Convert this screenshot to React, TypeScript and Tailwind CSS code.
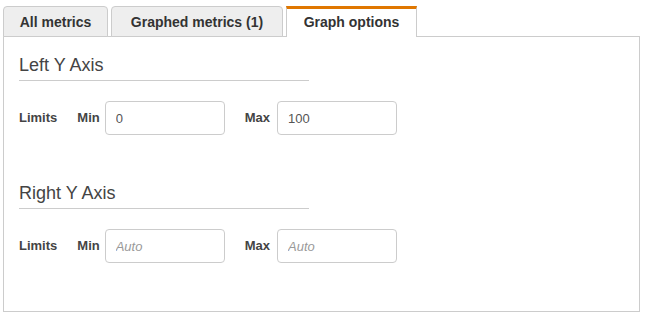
import React from "react";

function Tab({ label, active, w }: { label: string; active?: boolean; w: string }) {
  if (active) {
    return (
      <div className={`relative z-10 -mb-px h-[31px] flex items-center justify-center bg-white border-x border-[#ccc] border-t-[3px] border-t-[#e07700] text-[14px] font-bold text-[#333] ${w}`}>
        <span className="-mt-[1px]">{label}</span>
      </div>
    );
  }
  return (
    <div className={`relative z-10 -mb-px h-[31px] flex items-center justify-center bg-[#eeeeee] border border-[#ccc] rounded-t-[4px] text-[14px] font-bold text-[#333] ${w}`}>
      <span className="mt-[1px]">{label}</span>
    </div>
  );
}

function Field({ value, placeholder }: { value?: string; placeholder?: string }) {
  return (
    <input
      readOnly
      defaultValue={value}
      placeholder={placeholder}
      className="w-[120px] h-[34px] border border-[#ccc] rounded-[4px] pl-[10px] text-[13px] font-normal text-[#555] placeholder:text-[#999] placeholder:italic outline-none bg-white font-['Liberation_Sans',Arial,sans-serif]"
    />
  );
}

function Section({ title, min, max, placeholder }: { title: string; min?: string; max?: string; placeholder?: string }) {
  return (
    <div>
      <div className="w-[290px] border-b border-[#ccc] pb-[5px] text-[18px] leading-[20px] text-[#444]">{title}</div>
      <div className="mt-[20px] flex items-center h-[34px] text-[13px] font-bold text-[#444]">
        <span>Limits</span>
        <span className="ml-[20px] mr-[5px]">Min</span>
        <Field value={min} placeholder={placeholder} />
        <span className="ml-[20px] mr-[7px]">Max</span>
        <Field value={max} placeholder={placeholder} />
      </div>
    </div>
  );
}

export default function App() {
  return (
    <div className="w-[646px] h-[318px] bg-white font-['Liberation_Sans',Arial,sans-serif]">
      <div className="flex items-end pl-[3px] pt-[6px] gap-[3px]">
        <Tab label="All metrics" w="w-[105px]" />
        <Tab label="Graphed metrics (1)" w="w-[172px]" />
        <Tab label="Graph options" w="w-[131px]" active />
      </div>
      <div className="relative ml-[3px] w-[637px] h-[276px] border border-[#ccc] px-[15px] pt-[18px]">
        <Section title="Left Y Axis" min="0" max="100" />
        <div className="mt-[48px]">
          <Section title="Right Y Axis" placeholder="Auto" />
        </div>
      </div>
    </div>
  );
}
